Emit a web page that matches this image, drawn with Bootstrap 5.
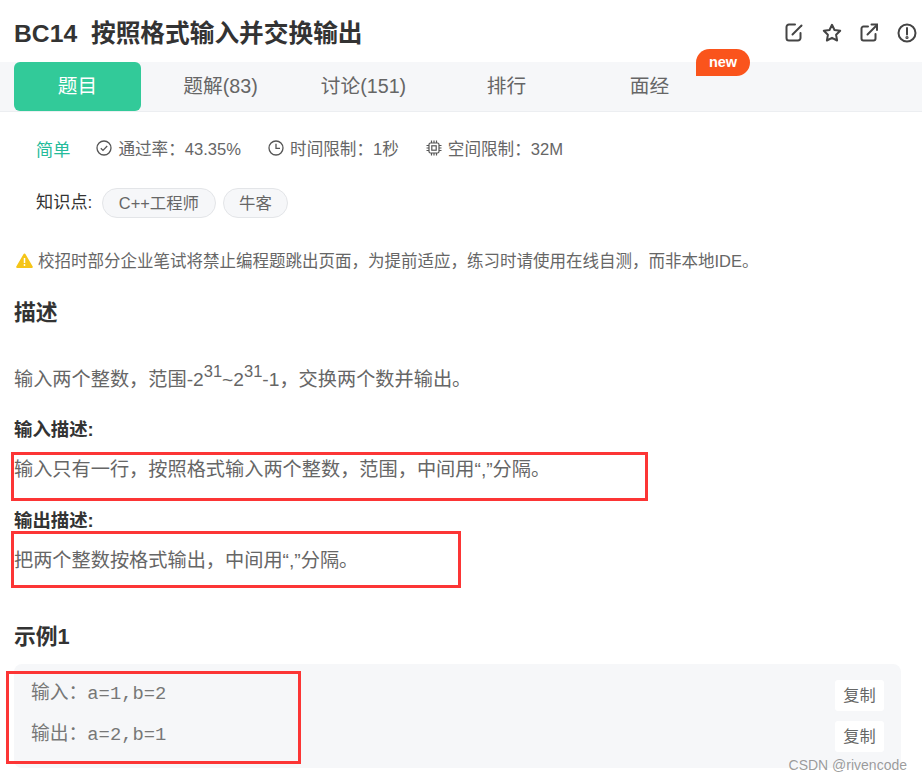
<!DOCTYPE html>
<html lang="zh">
<head>
    <meta charset="UTF-8">
    <title>BC14 按照格式输入并交换输出</title>
    <link href="https://cdn.jsdelivr.net/npm/bootstrap@5.3.0/dist/css/bootstrap.min.css" rel="stylesheet">
    <style>
        body {
            font-family: "Liberation Sans", "Noto Sans CJK SC", sans-serif;
            color: #555;
            font-size: 17.2px;
            height: 780px;
            overflow: hidden;
            position: relative;
        }
        .title-bar { height: 62px; padding: 6px 5px 0 14px; }
        .title-text { font-size: 24.7px; font-weight: 700; color: #333; margin: 0; line-height: 30px; }
        .title-text span { margin-left: 7px; }
        .tool-icons { gap: 18px; margin-top: -3px; }
        .tab-bar { height: 50px; background: #f6f7f9; border-bottom: 1px solid #eceef1; padding-left: 14px; gap: 16px; position: relative; }
        .tab-item { width: 127px; height: 49px; font-size: 19.7px; color: #666; border-radius: 6px; }
        .tab-item.is-on { background: #32ca99; color: #fff; }
        .new-tag { position: absolute; left: 696px; top: -13px; width: 54px; height: 27px; background: #fa541c; color: #fff; font-size: 14.5px; font-weight: 700; border-radius: 14px 14px 14px 0; }
        .meta-row { padding: 26px 0 0 36px; height: 61px; line-height: 24px; font-size: 16.6px; color: #666; }
        .meta-level { color: #25bb9b; font-size: 17.2px; margin-right: 26px; }
        .meta-item { margin-right: 27px; gap: 6px; height: 24px; }
        .meta-item svg { margin-top: -4px; }
        .tag-row { padding-left: 36px; height: 60px; padding-top: 15px; color: #333; font-size: 17.2px; }
        .tag-lead { height: 30px; margin-right: 3px; }
        .skill-tag { height: 30px; background: #f6f7f9; border: 1px solid #e3e5e8; border-radius: 15px; padding: 0 15.500px; font-size: 16.4px; color: #666; margin-left: 7px; }
        .warn-row { padding-left: 16px; height: 43px; padding-top: 16px; font-size: 16.5px; color: #666; gap: 5px; line-height: 24px; }
        .sec-head { font-size: 21.8px; font-weight: 700; color: #333; margin: 0; line-height: 30px; padding-left: 14px; }
        .sec-sub { font-size: 18.4px; font-weight: 700; color: #333; margin: 0; line-height: 24px; padding-left: 14px; }
        .sec-text { padding-left: 14px; margin: 0; line-height: 28px; color: #666; font-size: 19.2px; }
        .sec-text sup { font-size: 16.5px; top: -9px; vertical-align: baseline; position: relative; line-height: 0; }
        .sample-box { margin: 12px 21px 0 14px; height: 104px; background: #f6f7f9; border-radius: 8px; padding: 9px 17px 0 17px; }
        .sample-line { height: 41px; line-height: 41px; color: #777; font-size: 18.8px; }
        .sample-line code { font-family: "Liberation Mono", "Noto Sans CJK SC", monospace; color: #777; font-size: 18.8px; }
        .copy-btn { width: 49px; height: 31px; line-height: 31px; margin-top: 3px; background: #fff; border-radius: 3px; font-size: 16.2px; color: #666; padding: 0; border: 0; }
        .red-mark { position: absolute; border: 3px solid #fc3535; }
        .mark-one { left: 11px; top: 452px; width: 637px; height: 49px; }
        .mark-two { left: 11px; top: 531px; width: 450px; height: 57px; }
        .mark-three { left: 6px; top: 671px; width: 295px; height: 93px; }
        .watermark { position: absolute; right: 15px; top: 756px; font-size: 14px; line-height: 18px; color: rgba(90, 90, 90, .6); }
    </style>
</head>
<body>
    <div class="title-bar d-flex align-items-center justify-content-between">
        <h1 class="title-text">BC14 <span>按照格式输入并交换输出</span></h1>
        <div class="tool-icons d-flex align-items-center">
            <svg width="19" height="19" viewBox="0 0 19 19" fill="none" stroke="#444" stroke-width="2" stroke-linecap="round"><path d="M15.5 10v5a2.5 2.5 0 0 1-2.5 2.5H4A2.5 2.5 0 0 1 1.500 15V4A2.500 2.500 0 0 1 4 1.500h6"/><path d="M7.500 11.500 16.500 2.500"/></svg>
            <svg width="20" height="19" viewBox="0 0 20 19" fill="none" stroke="#444" stroke-width="2" stroke-linejoin="round"><path d="M10 1.800l2.500 5.200 5.700.8-4.100 4 1 5.700-5.100-2.700-5.100 2.700 1-5.700-4.100-4 5.700-.8z"/></svg>
            <svg width="19" height="19" viewBox="0 0 19 19" fill="none" stroke="#444" stroke-width="2" stroke-linecap="round"><path d="M15.500 11v4.500a2 2 0 0 1-2 2H3.500a2 2 0 0 1-2-2V5.500a2 2 0 0 1 2-2H8"/><path d="M7.500 11.500 16.500 2.500"/><path d="M11.500 1.500h5.500V7"/></svg>
            <svg width="20" height="20" viewBox="0 0 20 20" fill="none" stroke="#444" stroke-width="2"><circle cx="10" cy="10" r="8.500"/><path d="M10 5v6.500" stroke-linecap="round"/><circle cx="10" cy="14.500" r=".6"/></svg>
        </div>
    </div>

    <div class="tab-bar d-flex">
        <div class="tab-item is-on d-flex align-items-center justify-content-center">题目</div>
        <div class="tab-item d-flex align-items-center justify-content-center">题解(83)</div>
        <div class="tab-item d-flex align-items-center justify-content-center">讨论(151)</div>
        <div class="tab-item d-flex align-items-center justify-content-center">排行</div>
        <div class="tab-item d-flex align-items-center justify-content-center">面经</div>
        <div class="new-tag d-flex align-items-center justify-content-center">new</div>
    </div>

    <div class="meta-row d-flex align-items-start">
        <span class="meta-level">简单</span>
        <span class="meta-item d-flex align-items-center">
            <svg width="16" height="16" viewBox="0 0 16 16" fill="none" stroke="#555" stroke-width="1.300"><circle cx="8" cy="8" r="7"/><path d="M4.800 8.200l2.200 2.200 4.200-4.400"/></svg>
            通过率：43.35%
        </span>
        <span class="meta-item d-flex align-items-center">
            <svg width="16" height="16" viewBox="0 0 16 16" fill="none" stroke="#555" stroke-width="1.300"><circle cx="8" cy="8" r="7"/><path d="M8 3.800V8.300H12"/></svg>
            时间限制：1秒
        </span>
        <span class="meta-item d-flex align-items-center">
            <svg width="16" height="16" viewBox="0 0 16 16" fill="none" stroke="#555" stroke-width="1.200"><rect x="3" y="3" width="10" height="10" rx="1.500"/><rect x="5.800" y="5.800" width="4.400" height="4.400"/><path d="M5.500 .5V3M8 .5V3M10.500 .5V3M5.500 13v2.500M8 13v2.500M10.500 13v2.500M.5 5.500H3M.5 8H3M.5 10.500H3M13 5.500h2.500M13 8h2.500M13 10.500h2.500"/></svg>
            空间限制：32M
        </span>
    </div>

    <div class="tag-row d-flex">
        <span class="tag-lead d-flex align-items-center">知识点:</span>
        <span class="skill-tag d-flex align-items-center">C++工程师</span>
        <span class="skill-tag d-flex align-items-center">牛客</span>
    </div>

    <div class="warn-row d-flex">
        <svg class="mt-1" width="17" height="15" viewBox="0 0 17 15"><path d="M8.500 .5a1 1 0 0 1 .9.5l7.300 12.500a1 1 0 0 1-.9 1.500H1.200a1 1 0 0 1-.9-1.500L7.600 1a1 1 0 0 1 .9-.5z" fill="#f5c518"/><path d="M8.500 5v5" stroke="#fff" stroke-width="1.500"/><circle cx="8.500" cy="12" r=".9" fill="#fff"/></svg>
        <span>校招时部分企业笔试将禁止编程题跳出页面，为提前适应，练习时请使用在线自测，而非本地IDE。</span>
    </div>

    <h2 class="sec-head" style="margin-top:22px">描述</h2>
    <p class="sec-text" style="margin-top:38px">输入两个整数，范围-2<sup>31</sup>~2<sup>31</sup>-1，交换两个数并输出。</p>
    <h3 class="sec-sub" style="margin-top:24px">输入描述:</h3>
    <p class="sec-text" style="margin-top:14px">输入只有一行，按照格式输入两个整数，范围，中间用“,”分隔。</p>
    <h3 class="sec-sub" style="margin-top:25px">输出描述:</h3>
    <p class="sec-text" style="margin-top:14px">把两个整数按格式输出，中间用“,”分隔。</p>
    <h2 class="sec-head" style="margin-top:47px">示例1</h2>

    <div class="sample-box">
        <div class="sample-line d-flex justify-content-between align-items-center">
            <span>输入：<code>a=1,b=2</code></span>
            <button type="button" class="copy-btn">复制</button>
        </div>
        <div class="sample-line d-flex justify-content-between align-items-center">
            <span>输出：<code>a=2,b=1</code></span>
            <button type="button" class="copy-btn">复制</button>
        </div>
    </div>

    <div class="red-mark mark-one"></div>
    <div class="red-mark mark-two"></div>
    <div class="red-mark mark-three"></div>
    <div class="watermark">CSDN @rivencode</div>
</body>
</html>
